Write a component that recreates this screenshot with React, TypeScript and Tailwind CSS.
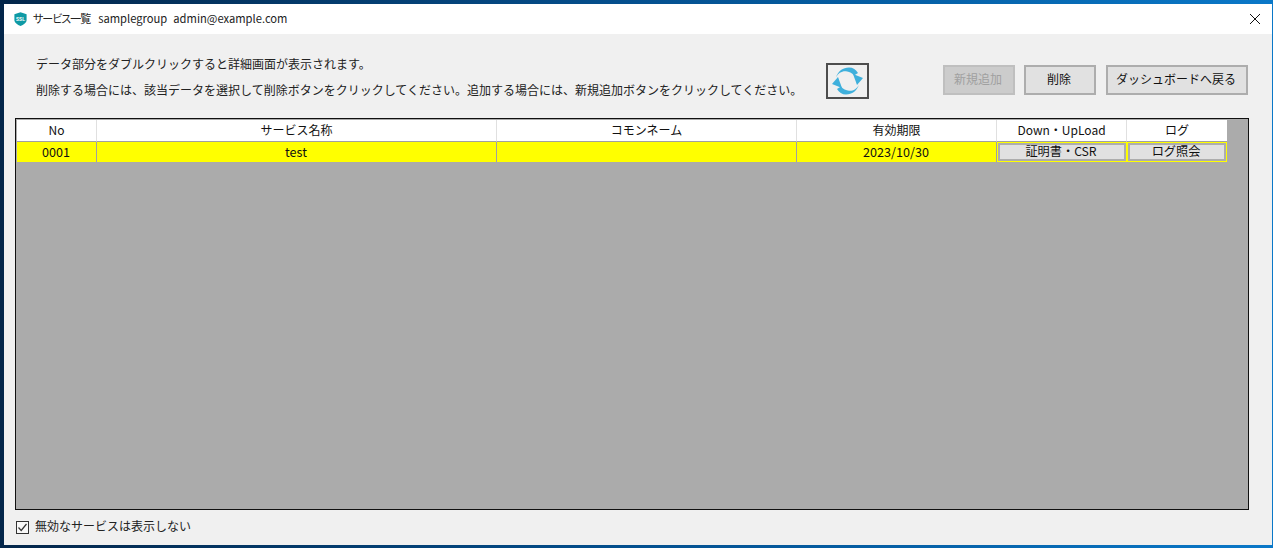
const font = { fontFamily: '"Noto Sans CJK JP", "Noto Sans", sans-serif' };

function ToolButton({ label, disabled, className }: { label: string; disabled?: boolean; className: string }) {
  return (
    <button
      className={`h-[30px] border-2 pb-[2px] pr-[2px] text-[12px] ${
        disabled ? 'border-[#bfbfbf] bg-[#cccccc] text-[#a0a0a0]' : 'border-[#adadad] bg-[#e1e1e1] text-[#111111]'
      } ${className}`}
    >
      {label}
    </button>
  );
}

function HeaderCell({ label, className }: { label: string; className?: string }) {
  return (
    <div className={`flex h-[22px] items-center justify-center border-b border-r border-b-[#a0a0a0] border-r-[#e0e0e0] bg-white pb-[2px] text-[12px] text-[#111111] ${className ?? ''}`}>
      {label}
    </div>
  );
}

function DataCell({ label }: { label?: string }) {
  return (
    <div className="flex h-[20px] items-center justify-center border-r border-[#a0a0a0] bg-[#ffff00] pr-[1px] text-[12.6px] text-[#111111]">
      {label}
    </div>
  );
}

function GridButton({ label }: { label: string }) {
  return (
    <div className="flex h-[20px] items-center justify-center bg-[#ffff00] p-px">
      <div className="flex h-full w-full items-center justify-center border-2 border-[#adadad] bg-[#e1e1e1] pb-[1px] pr-[2px] text-[12.2px] text-[#111111]">
        {label}
      </div>
    </div>
  );
}

export default function App() {
  return (
    <div
      style={font}
      className="flex h-[548px] w-[1273px] flex-col overflow-hidden bg-gradient-to-r from-[#03264a] via-[#04508f] to-[#0a78c8] pb-[3px] pl-1 pr-px pt-1"
    >
      <div className="flex min-h-0 flex-1 flex-col bg-[#f0f0f0]">
        {/* Title bar */}
        <div className="flex h-[30px] shrink-0 items-center bg-white pb-[2px] pl-[10px] pr-[11px] text-[12px] text-[#222222]">
          <svg width="13" height="14" viewBox="0 0 13 14" className="mr-[6px] mt-[2px]">
            <path d="M6.5 0.3 L12.6 2.2 V8 C12.6 10.8 9.5 12.8 6.5 13.9 C3.5 12.8 0.4 10.8 0.4 8 V2.2 Z" fill="#0f9aa5" />
            <text x="6.5" y="8.6" textAnchor="middle" fontSize="4.6" fontWeight="700" fill="#ffffff" fontFamily="Liberation Sans, sans-serif">
              SSL
            </text>
          </svg>
          <span className="text-[11px] tracking-[-1px] [font-feature-settings:'palt']">サービス一覧</span>
          <span className="ml-[8px] text-[11.2px]">samplegroup</span>
          <span className="ml-[6px] text-[11.2px]">admin@example.com</span>
          <svg width="12" height="12" viewBox="0 0 12 12" className="ml-auto mt-[2px]">
            <path d="M1 1 L11 11 M11 1 L1 11" stroke="#111111" strokeWidth="1" />
          </svg>
        </div>

        {/* Instructions and actions */}
        <div className="flex h-[84px] shrink-0 pl-[32px] pr-[24px]">
          <div className="w-[790px] pt-[17px] text-[12px] leading-[26px] text-[#222222]">
            <p>データ部分をダブルクリックすると詳細画面が表示されます。</p>
            <p>削除する場合には、該当データを選択して削除ボタンをクリックしてください。追加する場合には、新規追加ボタンをクリックしてください。</p>
          </div>
          <div className="mt-[29px] flex h-[36px] w-[43px] items-center justify-center border-2 border-[#4d4d4d] bg-[#f0f0f0]">
            <svg width="39" height="32" viewBox="0 0 39 32">
              <g fill="#3fb0dc">
                <path d="M8 12.5 C10 6 15 2.5 21 2.5 C25 2.5 28 4.5 30 8 L26 10.5 C24 8 21 6.5 18 6.2 C14 5.8 10 8 8 12.5 Z" />
                <path d="M25 9 L35 13 L29 20 Z" />
                <g transform="rotate(180 19.5 16)">
                  <path d="M8 12.5 C10 6 15 2.5 21 2.5 C25 2.5 28 4.5 30 8 L26 10.5 C24 8 21 6.5 18 6.2 C14 5.8 10 8 8 12.5 Z" />
                  <path d="M25 9 L35 13 L29 20 Z" />
                </g>
              </g>
            </svg>
          </div>
          <div className="ml-auto mt-[31px] flex items-start">
            <ToolButton label="新規追加" disabled className="w-[72px]" />
            <ToolButton label="削除" className="ml-[9px] w-[72px]" />
            <ToolButton label="ダッシュボードへ戻る" className="ml-[10px] w-[142px]" />
          </div>
        </div>

        {/* Data grid */}
        <div className="mx-[11px] h-[392px] w-[1234px] shrink-0 border border-[#101010] bg-[#ababab] pl-px pt-px">
          <div className="grid w-[1210px] grid-cols-[80px_400px_300px_200px_130px_100px]">
            <HeaderCell label="No" />
            <HeaderCell label="サービス名称" />
            <HeaderCell label="コモンネーム" />
            <HeaderCell label="有効期限" />
            <HeaderCell label="Down・UpLoad" />
            <HeaderCell label="ログ" className="border-r-0" />
            <DataCell label="0001" />
            <DataCell label="test" />
            <DataCell />
            <DataCell label="2023/10/30" />
            <GridButton label="証明書・CSR" />
            <GridButton label="ログ照会" />
          </div>
        </div>

        {/* Footer */}
        <div className="flex flex-1 items-center pl-[12px] text-[12px] text-[#222222]">
          <span className="flex h-[13px] w-[13px] items-center justify-center border border-[#333333] bg-[#f8f8f8]">
            <svg width="11" height="11" viewBox="0 0 11 11">
              <path d="M1.5 5.5 L4.2 8.5 L9.5 2" fill="none" stroke="#333333" strokeWidth="1.2" />
            </svg>
          </span>
          <span className="mb-[3px] ml-[6px]">無効なサービスは表示しない</span>
        </div>
      </div>
    </div>
  );
}
